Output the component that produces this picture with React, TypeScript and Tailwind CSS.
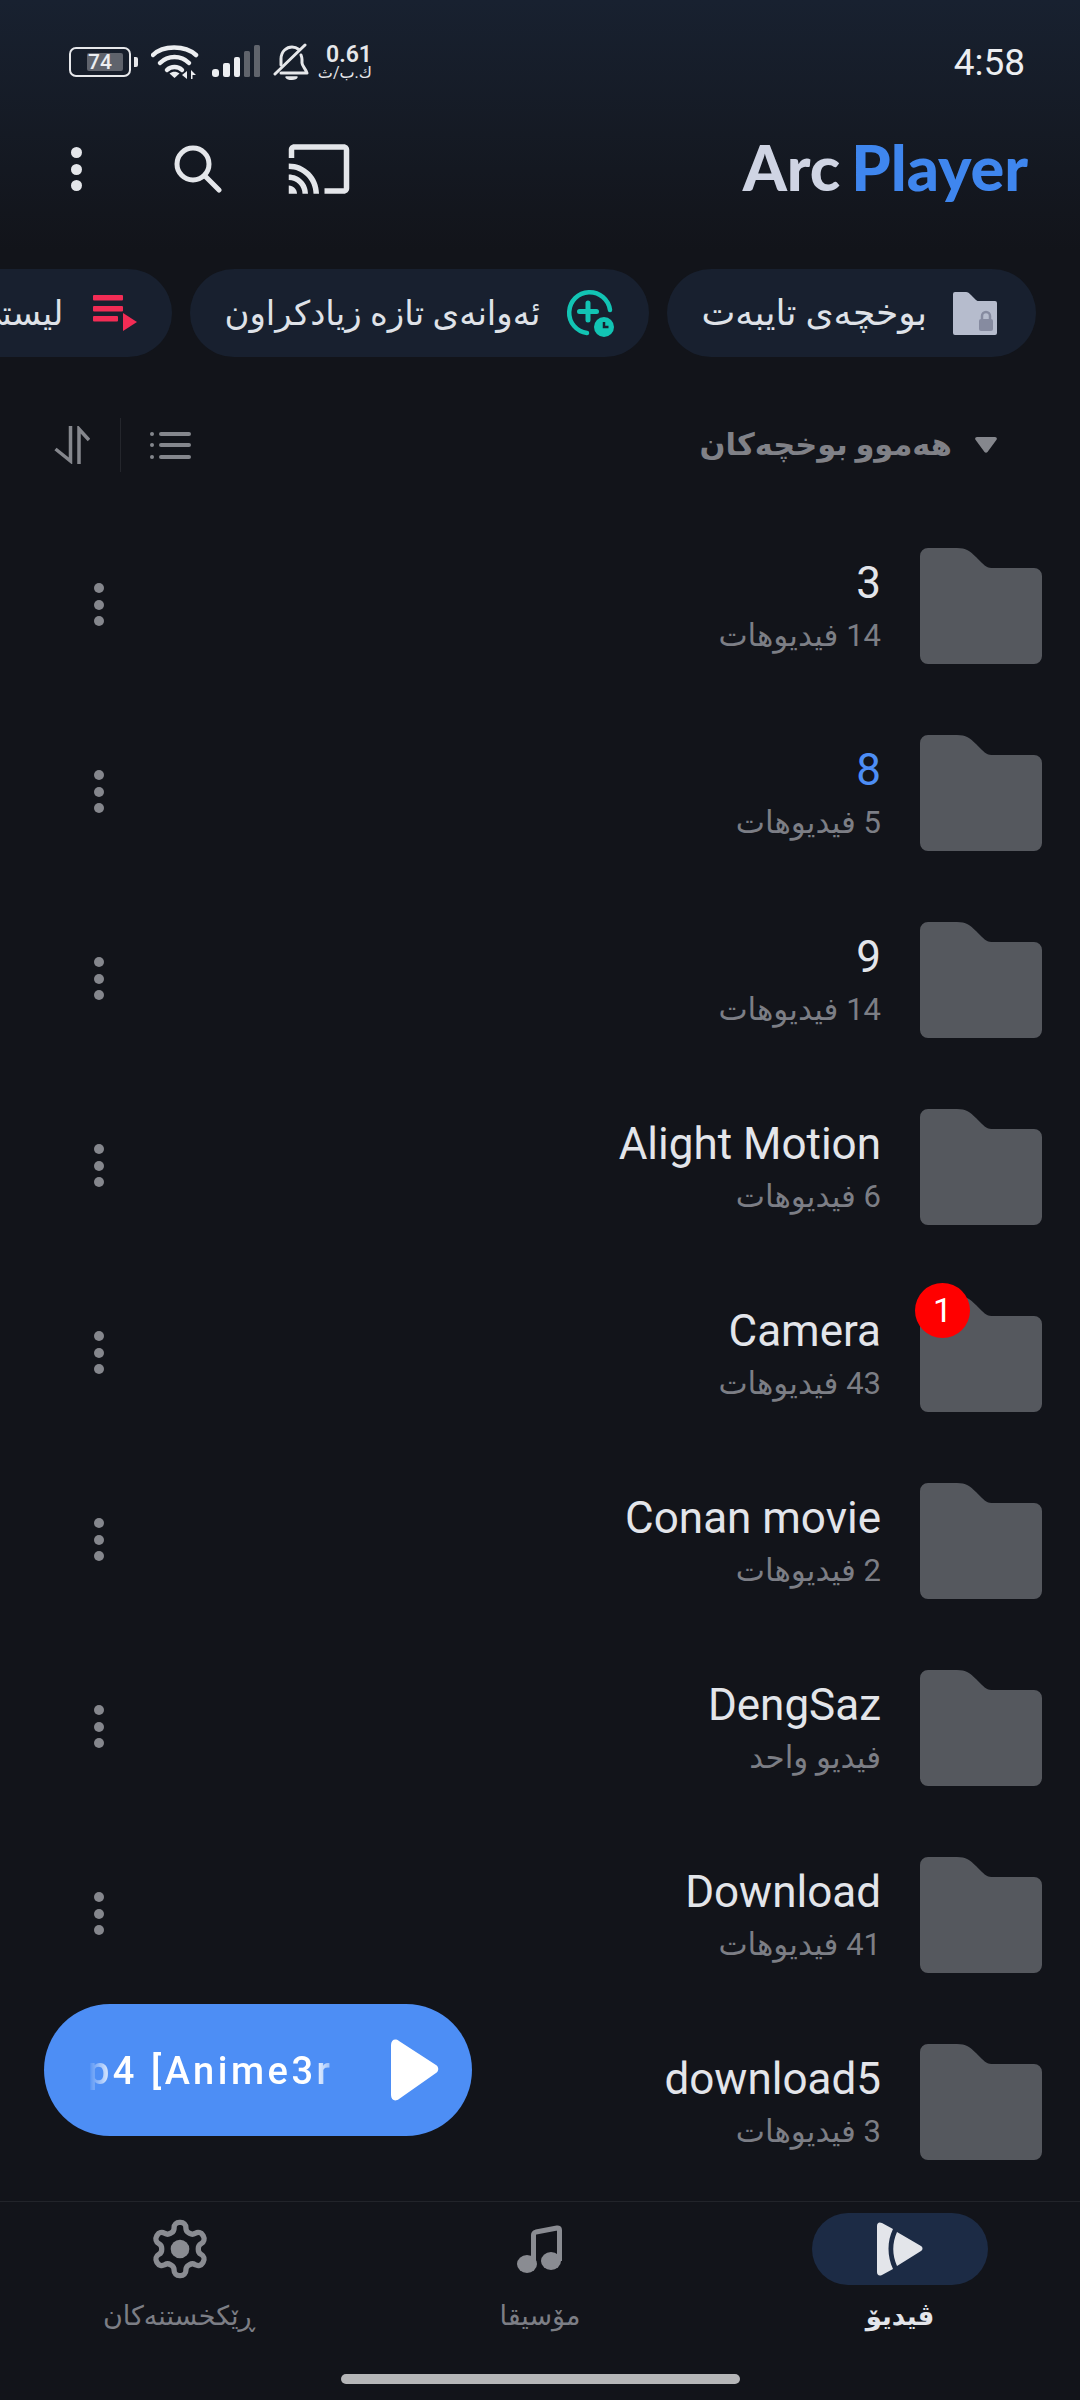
type Folder = {
  name: string
  count: string
  active?: boolean
  badge?: boolean
}

const folders: Folder[] = [
  { name: '3', count: '14 فیدیوهات' },
  { name: '8', count: '5 فیدیوهات', active: true },
  { name: '9', count: '14 فیدیوهات' },
  { name: 'Alight Motion', count: '6 فیدیوهات' },
  { name: 'Camera', count: '43 فیدیوهات', badge: true },
  { name: 'Conan movie', count: '2 فیدیوهات' },
  { name: 'DengSaz', count: 'فیدیو واحد' },
  { name: 'Download', count: '41 فیدیوهات' },
  { name: 'download5', count: '3 فیدیوهات' },
]

function StatusBar() {
  return (
    <div className="flex h-[80px] items-center justify-between pl-[69px] pr-[55px] pt-[44px]">
      <div className="flex items-center">
        <div className="relative flex h-[30px] w-[62px] items-center rounded-[7px] border-[2.5px] border-[#e6e7ea]">
          <div className="absolute left-[16px] top-[3.500px] h-[18px] w-[36px] rounded-[2px] bg-[#5f636c]" />
          <span className="relative ml-[17px] text-[21px] font-medium leading-none text-[#eceef1]">74</span>
        </div>
        <div className="ml-[3px] h-[10px] w-[4px] rounded-r-[2px] bg-[#e6e7ea]" />
        <svg width="48" height="36" viewBox="0 0 48 36" className="ml-[13px]" fill="none" stroke="#eceef1" strokeLinecap="round">
          <path d="M2 11C12 1 34 1 45 11" strokeWidth="4.500" />
          <path d="M9 19C17 11 30 11 38 19" strokeWidth="4.500" />
          <path d="M16 26C20 22 27 22 31 26" strokeWidth="4.500" />
          <path d="M23.500 34l-5-4.500c3-2.500 7-2.500 10 0z" fill="#eceef1" stroke="none" />
          <path d="M36 27v8l-5-4zM40 26l5 5h-3.500v4H40z" fill="#eceef1" stroke="none" />
        </svg>
        <svg width="48" height="34" viewBox="0 0 48 34" className="ml-[13px]" fill="#eceef1">
          <rect x="0" y="24" width="7" height="8" rx="3" />
          <rect x="11" y="18" width="7" height="14" rx="2" />
          <rect x="22" y="12" width="6" height="20" rx="2" />
          <rect x="32" y="6" width="6" height="26" rx="1.500" fill="#60646c" />
          <rect x="42" y="0" width="6" height="32" rx="1.500" fill="#60646c" />
        </svg>
        <svg width="36" height="38" viewBox="0 0 36 38" className="ml-[13px]" fill="none" stroke="#e6e7ea" strokeWidth="3" strokeLinecap="round" strokeLinejoin="round">
          <path d="M8 22V16C8 8 14 4 19 4c3 0 5 1 7 2.500" />
          <path d="M28 12c.6 1.500 1 3 1 4.500V20c0 3 4 6 5 10H8" />
          <path d="M2 31L32 2" />
          <path d="M13 34h11c-1 3-9 3-11 0z" fill="#e6e7ea" strokeWidth="1.500" />
        </svg>
        <div className="ml-[9px] flex w-[54px] flex-col items-end leading-none text-[#e6e7ea]">
          <span className="text-[23px] font-semibold leading-[20px]">0.61</span>
          <span className="whitespace-nowrap text-[16px] leading-[15px]">ك.ب/ث</span>
        </div>
      </div>
      <span className="text-[37px] leading-none text-[#eceef1]">4:58</span>
    </div>
  )
}

function Toolbar() {
  return (
    <div className="mt-[44px] flex h-[90px] items-center justify-between pl-[71px] pr-[52px]">
      <div className="flex items-center">
        <div className="flex flex-col gap-[5.500px]">
          <div className="h-[11px] w-[11px] rounded-full bg-[#e4e6ea]" />
          <div className="h-[11px] w-[11px] rounded-full bg-[#e4e6ea]" />
          <div className="h-[11px] w-[11px] rounded-full bg-[#e4e6ea]" />
        </div>
        <svg width="48" height="48" viewBox="0 0 48 48" className="ml-[92px]" fill="none" stroke="#e4e6ea" strokeWidth="5" strokeLinecap="round">
          <circle cx="19" cy="19" r="16" />
          <path d="M31 31l14 14" />
        </svg>
        <svg width="66" height="66" viewBox="0 0 24 24" className="ml-[64px]" fill="#e4e6ea">
          <path d="M21 3H3c-1.100 0-2 .9-2 2v3h2V5h18v14h-7v2h7c1.100 0 2-.9 2-2V5c0-1.100-.9-2-2-2zM1 18v3h3c0-1.660-1.340-3-3-3zm0-4v2c2.760 0 5 2.240 5 5h2c0-3.870-3.130-7-7-7zm0-4v2c4.970 0 9 4.030 9 9h2c0-6.080-4.930-11-11-11z" />
        </svg>
      </div>
      <div className="-mt-[5px] flex items-baseline gap-[11px] font-['Lato',sans-serif] text-[63px] font-black leading-none">
        <span className="text-[#cfd4e3]">Arc</span>
        <span className="text-[#3f86ee]">Player</span>
      </div>
    </div>
  )
}

function Chips() {
  return (
    <div className="mt-[19px] flex h-[88px] justify-end gap-[18px] overflow-hidden pr-[44px]">
      <div className="flex h-full shrink-0 items-center gap-[30px] rounded-full bg-[#18202f] pl-[30px] pr-[35px]">
        <span dir="rtl" className="text-[34px] leading-none text-[#dfe2e8]">لیستی پەخشکردن</span>
        <svg width="44" height="36" viewBox="0 0 44 36" fill="#f22c55">
          <rect x="0" y="0" width="30" height="5.500" rx="1" />
          <rect x="0" y="11" width="30" height="5.500" rx="1" />
          <rect x="0" y="21" width="25" height="5.500" rx="1" />
          <path d="M30 18l14 9-14 9z" />
        </svg>
      </div>
      <div className="flex h-full shrink-0 items-center gap-[26px] rounded-full bg-[#18202f] pl-[34px] pr-[35px]">
        <span dir="rtl" className="text-[34px] leading-none text-[#dfe2e8]">ئەوانەی تازە زیادکراون</span>
        <svg width="48" height="48" viewBox="0 0 48 48" fill="none">
          <path d="M21 44A20.500 20.500 0 1 1 44 21" stroke="#12c4b4" strokeWidth="4.500" strokeLinecap="round" />
          <path d="M22 14v17M13.500 22.500h17" stroke="#12c4b4" strokeWidth="5" strokeLinecap="round" />
          <circle cx="38" cy="38" r="10" fill="#12c4b4" />
          <path d="M38 33v5h4.500" stroke="#18202f" strokeWidth="2.500" />
        </svg>
      </div>
      <div className="flex h-full shrink-0 items-center gap-[26px] rounded-full bg-[#18202f] pl-[34px] pr-[39px]">
        <span dir="rtl" className="text-[36px] leading-none text-[#dfe2e8]">بوخچەی تایبەت</span>
        <svg width="44" height="43" viewBox="0 0 44 43">
          <path d="M0 2a2 2 0 0 1 2-2h11c2 0 3 1 5 3l5 5c1 1 2 1 3 1h16a2 2 0 0 1 2 2v30a2 2 0 0 1-2 2H2a2 2 0 0 1-2-2z" fill="#b6bccd" />
          <rect x="26" y="27" width="14" height="12" rx="2" fill="#868ba0" />
          <path d="M29 27v-3a4 4 0 0 1 8 0v3" fill="none" stroke="#868ba0" strokeWidth="2.500" />
        </svg>
      </div>
    </div>
  )
}

function SortRow() {
  return (
    <div className="mt-[44px] flex h-[88px] items-center pl-[54px] pr-[83px]">
      <svg width="36" height="38" viewBox="0 0 36 38" fill="none" stroke="#85878d" strokeWidth="3.500">
        <path d="M16.500 0v35L1.500 23" />
        <path d="M25 38V3l10 11" />
      </svg>
      <div className="ml-[30px] h-[54px] w-px bg-[#24262c]" />
      <div className="ml-[29px] flex w-[41px] flex-col gap-[7.500px]">
        {[0, 1, 2].map((i) => (
          <div key={i} className="flex items-center gap-[5px]">
            <div className="h-[4px] w-[4px] rounded-full bg-[#85878d]" />
            <div className="h-[4px] flex-1 rounded-full bg-[#85878d]" />
          </div>
        ))}
      </div>
      <div className="ml-auto flex items-center gap-[23px]">
        <span dir="rtl" className="text-[30.500px] font-bold leading-none text-[#808187]">هەموو بوخچەکان</span>
        <svg width="22" height="16" viewBox="0 0 22 16" fill="#85878d">
          <path d="M2 0h18c1.500 0 2.400 1.500 1.500 2.800L12.500 15c-.8 1.100-2.200 1.100-3 0L.5 2.800C-.4 1.500.5 0 2 0z" />
        </svg>
      </div>
    </div>
  )
}

function FolderRow({ folder }: { folder: Folder }) {
  return (
    <div className="flex h-[187px] items-center pl-[94px] pr-[38px]">
      <div className="flex flex-col gap-[6.500px] pb-[2px]">
        <div className="h-[10px] w-[10px] rounded-full bg-[#85878d]" />
        <div className="h-[10px] w-[10px] rounded-full bg-[#85878d]" />
        <div className="h-[10px] w-[10px] rounded-full bg-[#85878d]" />
      </div>
      <div className="ml-auto flex flex-col items-end">
        <span className={`text-[44px] leading-[52px] ${folder.active ? 'text-[#4d8ef5]' : 'text-[#e3e5ea]'}`}>
          {folder.name}
        </span>
        <span dir="rtl" className="mt-[8px] text-[31px] leading-[38px] text-[#7c7e85]">{folder.count}</span>
      </div>
      <div className="relative ml-[39px] h-[116px] w-[122px]">
        <svg width="122" height="116" viewBox="0 0 122 116">
          <path d="M0 8a8 8 0 0 1 8-8h29c9 0 13 3 19 9l6 6c4 4 6 5 11 5h41a8 8 0 0 1 8 8v80a8 8 0 0 1-8 8H8a8 8 0 0 1-8-8z" fill="#55585e" />
        </svg>
        {folder.badge ? (
          <div className="absolute -left-[5px] -top-[13px] flex h-[55px] w-[55px] items-center justify-center rounded-full bg-[#ff0000] text-[34px] leading-none text-white">
            1
          </div>
        ) : null}
      </div>
    </div>
  )
}

function NavBar() {
  return (
    <div className="mt-[6px] flex h-[199px] flex-col border-t border-[#22242a]">
      <div className="flex h-[160px] px-[90px] pt-[11px]">
        <div className="flex w-[178px] flex-col items-center">
          <div className="flex h-[72px] items-center">
            <svg width="64" height="64" viewBox="0 0 24 24" className="translate-x-[1px]" fill="none" stroke="#8a8c92" strokeWidth="2">
              <path d="M12.220 2h-.44a2 2 0 0 0-2 2v.18a2 2 0 0 1-1 1.730l-.43.25a2 2 0 0 1-2 0l-.15-.08a2 2 0 0 0-2.730.73l-.22.38a2 2 0 0 0 .73 2.730l.15.1a2 2 0 0 1 1 1.720v.51a2 2 0 0 1-1 1.740l-.15.09a2 2 0 0 0-.73 2.730l.22.38a2 2 0 0 0 2.730.73l.15-.08a2 2 0 0 1 2 0l.43.25a2 2 0 0 1 1 1.730V20a2 2 0 0 0 2 2h.44a2 2 0 0 0 2-2v-.18a2 2 0 0 1 1-1.730l.43-.25a2 2 0 0 1 2 0l.15.08a2 2 0 0 0 2.730-.73l.22-.39a2 2 0 0 0-.73-2.730l-.15-.08a2 2 0 0 1-1-1.740v-.5a2 2 0 0 1 1-1.740l.15-.09a2 2 0 0 0 .73-2.730l-.22-.38a2 2 0 0 0-2.730-.73l-.15.08a2 2 0 0 1-2 0l-.43-.25a2 2 0 0 1-1-1.730V4a2 2 0 0 0-2-2z" />
              <circle cx="12" cy="12" r="3.500" fill="#8a8c92" stroke="none" />
            </svg>
          </div>
          <span dir="rtl" className="mt-[14px] text-[27px] leading-[34px] text-[#7c7e85]">ڕێکخستنەکان</span>
        </div>
        <div className="ml-[222px] flex w-[100px] flex-col items-center">
          <div className="flex h-[72px] items-center">
            <svg width="46" height="48" viewBox="0 0 46 48" fill="#8a8c92">
              <ellipse cx="10" cy="39" rx="10" ry="9" />
              <ellipse cx="34" cy="36" rx="10" ry="9" />
              <path d="M16.500 39V10c0-1.500 1-2.500 2.500-3l21-4c1.500-.3 2.500.5 2.500 2V36" fill="none" stroke="#8a8c92" strokeWidth="5" strokeLinejoin="round" />
            </svg>
          </div>
          <span dir="rtl" className="mt-[14px] text-[27px] leading-[34px] text-[#7c7e85]">مۆسیقا</span>
        </div>
        <div className="ml-auto flex w-[176px] -translate-x-[2px] flex-col items-center">
          <div className="flex h-[72px] w-[176px] items-center justify-center rounded-full bg-[#1c2b45]">
            <svg width="46" height="54" viewBox="0 0 46 54" fill="#e3e5ea">
              <path d="M0 4c0-3 2-4.500 5-3l11 6c-6 12-6 27 0 40L5 53c-3 1.500-5 0-5-3z" />
              <path d="M20 10l24 14c2 1.200 2 3.800 0 5L20 44c-5-11-5-23 0-34z" />
            </svg>
          </div>
          <span dir="rtl" className="mt-[14px] text-[26px] font-bold leading-[34px] text-[#e3e5ea]">ڤیدیۆ</span>
        </div>
      </div>
      <div className="mx-auto mt-[12px] h-[10px] w-[399px] rounded-full bg-[#b5b6b8]" />
    </div>
  )
}

export default function App() {
  return (
    <div className="relative h-[2400px] w-[1080px] overflow-hidden bg-[#12141a] font-['Roboto','Noto_Sans','DejaVu_Sans',sans-serif]">
      <div className="h-[250px] bg-gradient-to-b from-[#182130] to-[#12141a]">
        <StatusBar />
        <Toolbar />
      </div>
      <Chips />
      <SortRow />
      <div className="mt-[23px]">
        {folders.map((f) => (
          <FolderRow key={f.name} folder={f} />
        ))}
      </div>
      <NavBar />
      <div className="absolute left-[44px] top-[2004px] flex h-[132px] w-[428px] items-center rounded-full bg-[#4d8ef5] pl-[44px]">
        <span className="w-[256px] overflow-hidden whitespace-nowrap pt-[2px] text-[38px] font-medium leading-none tracking-[3.500px] text-white [mask-image:linear-gradient(to_right,transparent,black_10%,black_88%,transparent)]">
          p4 [Anime3r
        </span>
        <svg width="48" height="62" viewBox="0 0 48 62" className="ml-[47px]" fill="#ffffff">
          <path d="M0 6c0-5 4-7 8-4l37 24c3 2 3 6 0 8L8 60c-4 3-8 1-8-4z" />
        </svg>
      </div>
    </div>
  )
}
